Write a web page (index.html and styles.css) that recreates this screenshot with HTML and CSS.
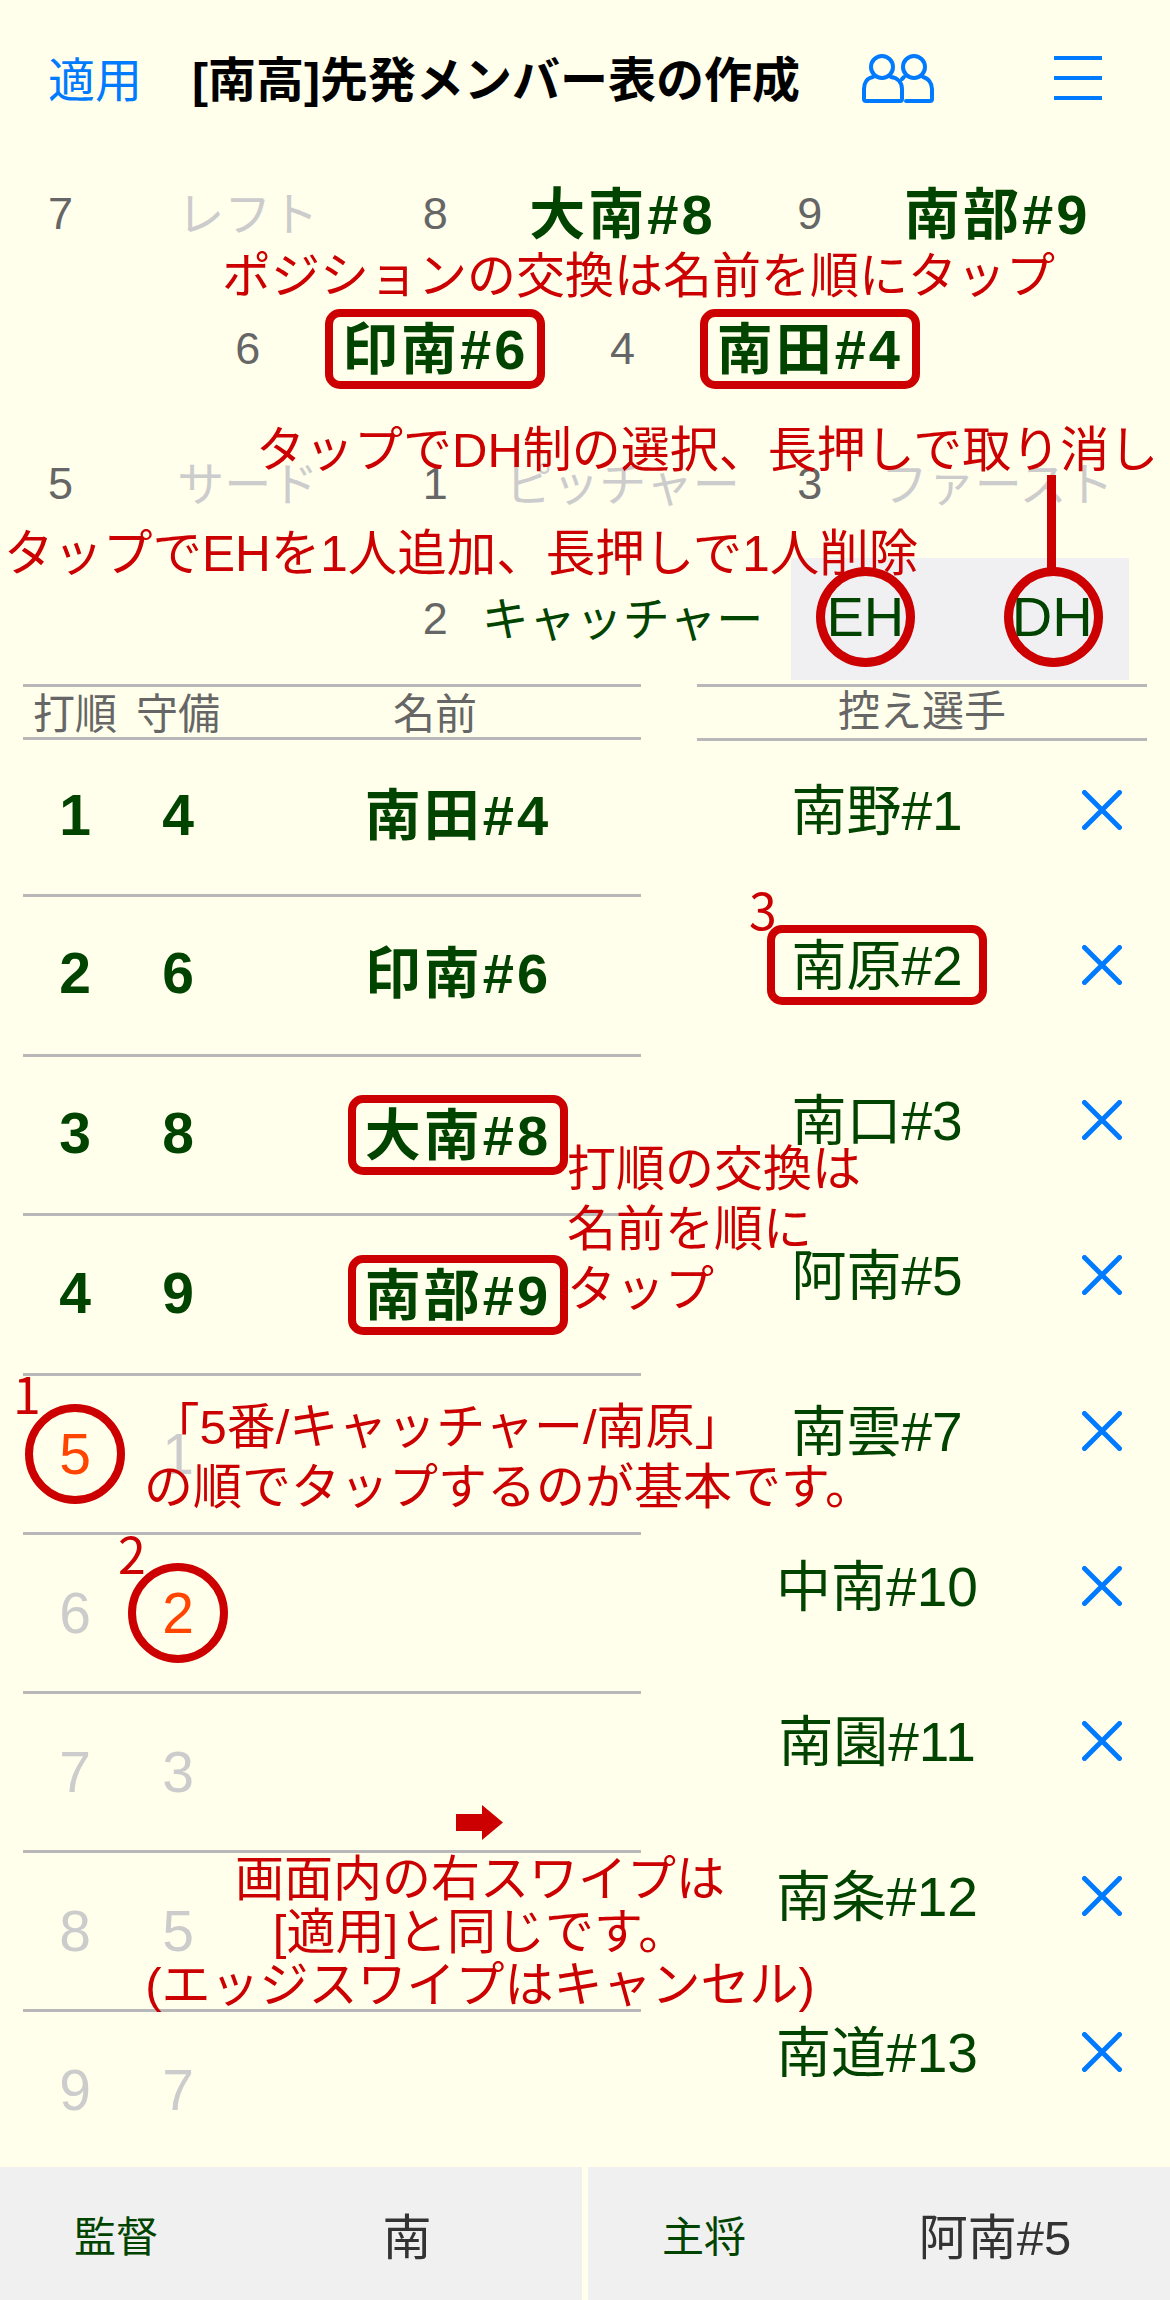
FILE: index.html
```html
<!DOCTYPE html>
<html lang="ja">
<head>
<meta charset="utf-8">
<title>先発メンバー表の作成</title>
<link rel="stylesheet" href="styles.css">
</head>
<body>
<div class="page">
  <header class="nav">
    <span class="apply">適用</span>
    <h1 class="title">[南高]先発メンバー表の作成</h1>
    <svg class="people" viewBox="0 0 72 50" fill="none" stroke="#007aff" stroke-width="4" stroke-linecap="round" stroke-linejoin="round">
      <circle cx="20" cy="14" r="11"/>
      <path d="M11 24 C5 25 2 30 2 36 V46 Q2 48 4 48 H38 Q40 48 40 46 V36 C40 30 36 25 29 24"/>
      <circle cx="52" cy="14" r="11"/>
      <path d="M44 48 H68 Q70 48 70 46 V36 C70 30 66 25 61 24 M40 26 L42 24"/>
    </svg>
    <span class="menu"><i></i><i></i><i></i></span>
  </header>

  <section class="field">
    <div class="field-row">
      <div class="pos"><span class="num">7</span><span class="pname off">レフト</span></div>
      <div class="pos"><span class="num">8</span><span class="pname on">大南#8</span></div>
      <div class="pos"><span class="num">9</span><span class="pname on">南部#9</span></div>
    </div>
    <div class="field-row center">
      <div class="pos"><span class="num">6</span><span class="pname on boxed"><span class="marked">印南#6</span></span></div>
      <div class="pos"><span class="num">4</span><span class="pname on boxed"><span class="marked">南田#4</span></span></div>
    </div>
    <div class="field-row">
      <div class="pos"><span class="num">5</span><span class="pname off">サード</span></div>
      <div class="pos"><span class="num">1</span><span class="pname off">ピッチャー</span></div>
      <div class="pos"><span class="num">3</span><span class="pname off">ファースト</span></div>
    </div>
    <div class="field-row">
      <div class="pos"></div>
      <div class="pos"><span class="num">2</span><span class="pname">キャッチャー</span></div>
      <div class="eh-dh"><span>EH</span><span>DH</span></div>
    </div>
  </section>

  <section class="lists">
    <div class="order">
      <div class="order-head"><span class="c-o">打順</span><span class="c-d">守備</span><span class="c-n">名前</span></div>
      <div class="order-row bold first"><span class="c-o">1</span><span class="c-d">4</span><span class="c-n">南田#4</span></div>
      <div class="order-row bold"><span class="c-o">2</span><span class="c-d">6</span><span class="c-n">印南#6</span></div>
      <div class="order-row bold"><span class="c-o">3</span><span class="c-d">8</span><span class="c-n boxed"><span class="marked">大南#8</span></span></div>
      <div class="order-row bold"><span class="c-o">4</span><span class="c-d">9</span><span class="c-n boxed"><span class="marked">南部#9</span></span></div>
      <div class="order-row"><span class="c-o pick">5</span><span class="c-d">1</span><span class="c-n"></span></div>
      <div class="order-row"><span class="c-o">6</span><span class="c-d pick">2</span><span class="c-n"></span></div>
      <div class="order-row"><span class="c-o">7</span><span class="c-d">3</span><span class="c-n"></span></div>
      <div class="order-row"><span class="c-o">8</span><span class="c-d">5</span><span class="c-n"></span></div>
      <div class="order-row"><span class="c-o">9</span><span class="c-d">7</span><span class="c-n"></span></div>
    </div>
    <div class="bench">
      <div class="bench-head">控え選手</div>
      <div class="bench-rows">
        <div class="bench-row"><span class="b-name">南野#1</span><svg class="x" viewBox="0 0 40 40"><path d="M2.500 2.500 L37.500 37.500 M37.500 2.500 L2.500 37.500"/></svg></div>
        <div class="bench-row"><span class="b-name boxed"><span class="marked">南原#2</span></span><svg class="x" viewBox="0 0 40 40"><path d="M2.500 2.500 L37.500 37.500 M37.500 2.500 L2.500 37.500"/></svg></div>
        <div class="bench-row"><span class="b-name">南口#3</span><svg class="x" viewBox="0 0 40 40"><path d="M2.500 2.500 L37.500 37.500 M37.500 2.500 L2.500 37.500"/></svg></div>
        <div class="bench-row"><span class="b-name">阿南#5</span><svg class="x" viewBox="0 0 40 40"><path d="M2.500 2.500 L37.500 37.500 M37.500 2.500 L2.500 37.500"/></svg></div>
        <div class="bench-row"><span class="b-name">南雲#7</span><svg class="x" viewBox="0 0 40 40"><path d="M2.500 2.500 L37.500 37.500 M37.500 2.500 L2.500 37.500"/></svg></div>
        <div class="bench-row"><span class="b-name">中南#10</span><svg class="x" viewBox="0 0 40 40"><path d="M2.500 2.500 L37.500 37.500 M37.500 2.500 L2.500 37.500"/></svg></div>
        <div class="bench-row"><span class="b-name">南園#11</span><svg class="x" viewBox="0 0 40 40"><path d="M2.500 2.500 L37.500 37.500 M37.500 2.500 L2.500 37.500"/></svg></div>
        <div class="bench-row"><span class="b-name">南条#12</span><svg class="x" viewBox="0 0 40 40"><path d="M2.500 2.500 L37.500 37.500 M37.500 2.500 L2.500 37.500"/></svg></div>
        <div class="bench-row"><span class="b-name">南道#13</span><svg class="x" viewBox="0 0 40 40"><path d="M2.500 2.500 L37.500 37.500 M37.500 2.500 L2.500 37.500"/></svg></div>
      </div>
    </div>
  </section>

  <footer class="bottom">
    <div class="staff"><span class="role">監督</span><span class="who">南</span></div>
    <div class="staff"><span class="role">主将</span><span class="who">阿南#5</span></div>
  </footer>

  <div class="note n-pos">ポジションの交換は名前を順にタップ</div>
  <div class="note n-dh">タップでDH制の選択、長押しで取り消し</div>
  <div class="note n-eh">タップでEHを1人追加、長押しで1人削除</div>
  <div class="dh-line"></div>
  <div class="ring r-eh"></div>
  <div class="ring r-dh"></div>
  <div class="note n-order">打順の交換は<br>名前を順に<br>タップ</div>
  <div class="note n-basic"><span class="hang">「5番/キャッチャー/南原」</span><br>の順でタップするのが基本です。</div>
  <div class="note n-swipe">画面内の右スワイプは<br>[適用]と同じです。<br>(エッジスワイプはキャンセル)</div>
  <div class="step s1">1</div>
  <div class="step s2">2</div>
  <div class="step s3">3</div>
  <svg class="arrow" viewBox="0 0 47 35"><path d="M0 9 H26 V0 L47 17.500 L26 35 V26 H0 Z"/></svg>
</div>
</body>
</html>
```
FILE: styles.css
```css
*, *::after { box-sizing: border-box; }
html, body { margin: 0; padding: 0; }
body {
  background: #ffffec;
  font-family: "Liberation Sans", "Noto Sans CJK JP", sans-serif;
  color: #004400;
}
.page { position: relative; width: 1170px; height: 2300px; overflow: hidden; }

.nav { display: flex; align-items: center; height: 146px; padding: 10px 0 0 48px; }
.apply { font-size: 47px; color: #007aff; width: 144px; padding-bottom: 4px; }
.title { margin: 0; font-size: 48px; font-weight: 700; color: #000; width: 670px; white-space: nowrap; padding-bottom: 4px; }
.people { width: 72px; height: 50px; flex: none; }
.menu { display: flex; flex-direction: column; gap: 16px; width: 48px; margin-left: 120px; }
.menu i { display: block; height: 4px; background: #007aff; }

.field { padding: 0 23px; }
.field-row { display: flex; height: 135px; align-items: center; }
.field-row.center { justify-content: center; }
.pos { display: flex; align-items: center; width: 374.67px; flex: none; }
.num { width: 75px; flex: none; text-align: center; font-size: 45px; color: #666; }
.pname { flex: 1; text-align: center; font-size: 47px; white-space: nowrap; padding-bottom: 6px; }
.pname.off { color: #ccc; }
.pname.on { font-size: 56px; font-weight: 700; letter-spacing: 3px; padding-bottom: 9px; }
.pname.boxed { padding-bottom: 0; }
.marked {
  display: inline-flex; align-items: center; justify-content: center;
  width: 220px; height: 80px; padding-bottom: 8px;
  border: 8px solid #cc0000; border-radius: 15px;
}
.eh-dh {
  display: flex; align-items: center; gap: 87px;
  width: 338px; height: 122px; margin-left: 19px; padding: 0 0 4px 24px; background: #f0f0f2;
  font-size: 56px;
}
.eh-dh span { width: 100px; text-align: center; }

.lists { display: flex; margin-top: -2px; padding: 0 23px; }
.order { width: 618px; flex: none; }
.order-head {
  display: flex; align-items: center; height: 53px; padding-bottom: 4px;
  border-top: 3px solid #b8b8b8; font-size: 42px; color: #666;
}
.order-row {
  display: flex; align-items: center; height: 159px;
  border-top: 3px solid #b8b8b8; font-size: 57px; color: #ccc;
}
.order-row.bold { color: #004400; font-weight: 700; height: 159.67px; }
.order-row.bold.first { height: 157px; }
.order-row.bold .c-o, .order-row.bold .c-d { padding-bottom: 4px; }
.order-row.bold .c-n { font-size: 56px; letter-spacing: 3px; padding-bottom: 14px; }
.order-row.bold .c-n.boxed { padding-bottom: 0; }
.c-o { width: 104px; flex: none; text-align: center; }
.c-d { width: 102px; flex: none; text-align: center; }
.c-n { flex: 1; text-align: center; }
.order-row .c-n { padding-left: 46px; }
.pick { color: #ff4500; position: relative; }
.pick::after {
  content: ""; position: absolute; left: 50%; top: 50%; width: 100px; height: 100px;
  margin: -50px 0 0 -50px; border: 8px solid #cc0000; border-radius: 50%;
}

.bench { width: 450px; margin-left: 56px; flex: none; }
.bench-head {
  height: 57px; border-top: 3px solid #b8b8b8; border-bottom: 3px solid #b8b8b8;
  font-size: 42px; line-height: 50px; color: #666; text-align: center;
}
.bench-rows { margin-top: -9px; }
.bench-row { display: flex; align-items: center; height: 155.25px; }
.b-name { width: 360px; flex: none; text-align: center; font-size: 55px; padding-bottom: 8px; }
.b-name.boxed { padding-bottom: 0; }
.x { width: 40px; height: 40px; margin-left: 25px; flex: none; }
.x path { fill: none; stroke: #007aff; stroke-width: 5; stroke-linecap: round; }

.bottom {
  position: absolute; left: 0; right: 0; top: 2167px; height: 133px;
  display: flex; justify-content: space-between;
}
.staff { display: flex; align-items: center; width: 582px; background: #f0f0f0; }
.role { width: 232px; text-align: center; font-size: 42px; }
.who { width: 350px; text-align: center; font-size: 49px; color: #333; }

.note { position: absolute; color: #cc0000; font-size: 49px; line-height: 53px; white-space: nowrap; }
.n-pos { left: 222px; top: 250px; }
.n-dh { left: 256px; top: 424px; }
.n-eh { left: 4px; top: 527px; font-size: 49.500px; }
.n-order { left: 567px; top: 1139px; line-height: 60px; }
.n-basic { left: 109px; width: 800px; top: 1397px; line-height: 60px; text-align: center; }
.hang { margin-right: 124px; }
.n-swipe { left: 80px; width: 800px; top: 1853px; text-align: center; }
.dh-line { position: absolute; left: 1047px; top: 475px; width: 9px; height: 94px; background: #cc0000; }
.ring { position: absolute; width: 99px; height: 100px; border: 9px solid #cc0000; border-radius: 50%; }
.r-eh { left: 816px; top: 567px; }
.r-dh { left: 1004px; top: 567px; }
.step { position: absolute; color: #cc0000; font-family: "Noto Sans CJK JP", sans-serif; font-size: 50px; line-height: 50px; }
.s1 { left: 13px; top: 1367px; }
.s2 { left: 118px; top: 1527px; }
.s3 { left: 749px; top: 883px; }
.arrow { position: absolute; left: 456px; top: 1805px; width: 47px; height: 35px; fill: #cc0000; }
```
